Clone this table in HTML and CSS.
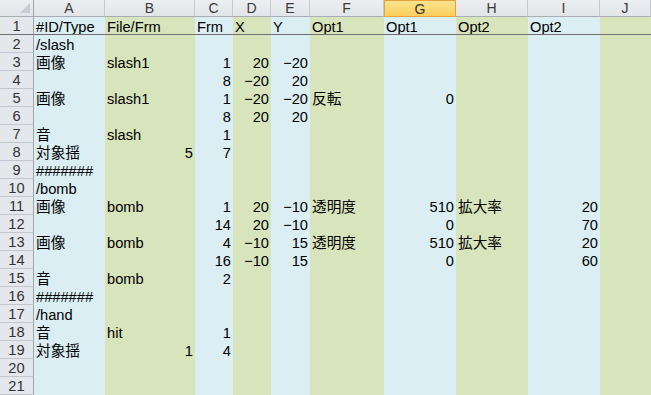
FILE: index.html
```html
<!DOCTYPE html>
<html lang="ja">
<head>
<meta charset="utf-8">
<title>Sheet</title>
<link rel="stylesheet" href="styles.css">
</head>
<body>
<div class="sheet">
  <div class="row head">
    <div class="corner"><span class="tri"></span></div>
    <div>A</div><div>B</div><div>C</div><div>D</div><div>E</div><div>F</div><div class="sel">G</div><div>H</div><div>I</div><div>J</div>
  </div>
  <div class="row r1"><div>1</div><div>#ID/Type</div><div>File/Frm</div><div>Frm</div><div>X</div><div>Y</div><div>Opt1</div><div>Opt1</div><div>Opt2</div><div>Opt2</div><div></div></div>
  <div class="row"><div>2</div><div>/slash</div><div></div><div></div><div></div><div></div><div></div><div></div><div></div><div></div><div></div></div>
  <div class="row"><div>3</div><div>画像</div><div>slash1</div><div class="n">1</div><div class="n">20</div><div class="n">−20</div><div></div><div></div><div></div><div></div><div></div></div>
  <div class="row"><div>4</div><div></div><div></div><div class="n">8</div><div class="n">−20</div><div class="n">20</div><div></div><div></div><div></div><div></div><div></div></div>
  <div class="row"><div>5</div><div>画像</div><div>slash1</div><div class="n">1</div><div class="n">−20</div><div class="n">−20</div><div>反転</div><div class="n">0</div><div></div><div></div><div></div></div>
  <div class="row"><div>6</div><div></div><div></div><div class="n">8</div><div class="n">20</div><div class="n">20</div><div></div><div></div><div></div><div></div><div></div></div>
  <div class="row"><div>7</div><div>音</div><div>slash</div><div class="n">1</div><div></div><div></div><div></div><div></div><div></div><div></div><div></div></div>
  <div class="row"><div>8</div><div>対象揺</div><div class="n">5</div><div class="n">7</div><div></div><div></div><div></div><div></div><div></div><div></div><div></div></div>
  <div class="row"><div>9</div><div>#######</div><div></div><div></div><div></div><div></div><div></div><div></div><div></div><div></div><div></div></div>
  <div class="row"><div>10</div><div>/bomb</div><div></div><div></div><div></div><div></div><div></div><div></div><div></div><div></div><div></div></div>
  <div class="row"><div>11</div><div>画像</div><div>bomb</div><div class="n">1</div><div class="n">20</div><div class="n">−10</div><div>透明度</div><div class="n">510</div><div>拡大率</div><div class="n">20</div><div></div></div>
  <div class="row"><div>12</div><div></div><div></div><div class="n">14</div><div class="n">20</div><div class="n">−10</div><div></div><div class="n">0</div><div></div><div class="n">70</div><div></div></div>
  <div class="row"><div>13</div><div>画像</div><div>bomb</div><div class="n">4</div><div class="n">−10</div><div class="n">15</div><div>透明度</div><div class="n">510</div><div>拡大率</div><div class="n">20</div><div></div></div>
  <div class="row"><div>14</div><div></div><div></div><div class="n">16</div><div class="n">−10</div><div class="n">15</div><div></div><div class="n">0</div><div></div><div class="n">60</div><div></div></div>
  <div class="row"><div>15</div><div>音</div><div>bomb</div><div class="n">2</div><div></div><div></div><div></div><div></div><div></div><div></div><div></div></div>
  <div class="row"><div>16</div><div>#######</div><div></div><div></div><div></div><div></div><div></div><div></div><div></div><div></div><div></div></div>
  <div class="row"><div>17</div><div>/hand</div><div></div><div></div><div></div><div></div><div></div><div></div><div></div><div></div><div></div></div>
  <div class="row"><div>18</div><div>音</div><div>hit</div><div class="n">1</div><div></div><div></div><div></div><div></div><div></div><div></div><div></div></div>
  <div class="row"><div>19</div><div>対象揺</div><div class="n">1</div><div class="n">4</div><div></div><div></div><div></div><div></div><div></div><div></div><div></div></div>
  <div class="row"><div>20</div><div></div><div></div><div></div><div></div><div></div><div></div><div></div><div></div><div></div><div></div></div>
  <div class="row"><div>21</div><div></div><div></div><div></div><div></div><div></div><div></div><div></div><div></div><div></div><div></div></div>
</div>
</body>
</html>
```
FILE: styles.css
```css
* { box-sizing: border-box; }
html, body { margin: 0; padding: 0; background: #ffffff; }
body {
  width: 651px;
  height: 395px;
  overflow: hidden;
  font-family: "Liberation Sans", "Noto Sans CJK JP", sans-serif;
  font-size: 14.67px;
  color: #000;
}
.sheet {
  display: flex;
  flex-direction: column;
}
.row {
  display: grid;
  grid-template-columns: 34px 71px 90px 38px 38px 39px 74px 72px 72px 72px 1fr;
  height: 18px;
}
.row > div {
  height: 18px;
  line-height: 18px;
  padding: 1px 2px 0 2px;
  white-space: nowrap;
  overflow: hidden;
}
.row > div.n { text-align: right; }

/* column fills */
.row > div:nth-child(2n) { background: #daeef3; }
.row > div:nth-child(2n+1) { background: #d8e4bc; }

/* row headers */
.row > div:first-child {
  background: #e4e7eb;
  border-right: 1px solid #9fa4aa;
  border-bottom: 1px solid #c3c7cd;
  text-align: center;
  color: #333;
  padding: 0 0 0 0;
  line-height: 18px;
}

/* column header */
.row.head { height: 17px; }
.row.head > div {
  height: 17px;
  line-height: 16px;
  padding: 0;
  text-align: center;
  background: linear-gradient(#eceef1, #e2e5e9);
  border-bottom: 1px solid #a9adb3;
  border-right: 1px solid #c6cad0;
  color: #3a3a3a;
  font-size: 14px;
}
.row.head > div.sel {
  background: linear-gradient(#fde38f, #f9cf5c);
  border: 1px solid #e8a33c;
  border-left: 1px solid #e8a33c;
  color: #333;
}
.row.head > .corner {
  position: relative;
  border-right: 1px solid #9fa4aa;
}
.corner .tri {
  position: absolute;
  right: 3px;
  bottom: 3px;
  width: 0;
  height: 0;
  border-left: 10px solid transparent;
  border-bottom: 10px solid #c9ccd1;
}

/* frozen first row line */
.row.r1 > div { border-bottom: 1px solid #6e6e6e; }
.row.r1 > div:first-child { border-bottom: 1px solid #6e6e6e; }
```
